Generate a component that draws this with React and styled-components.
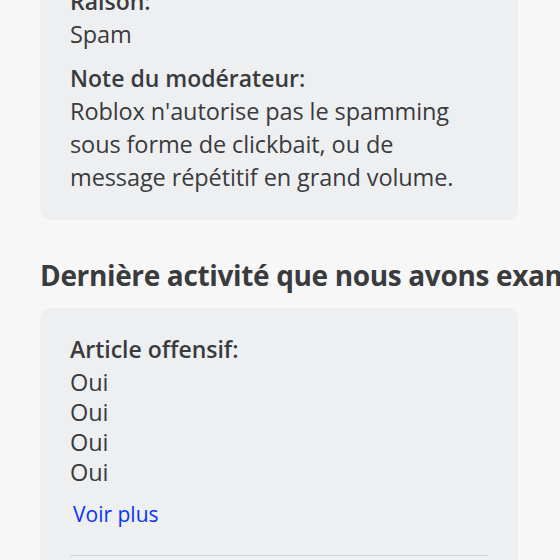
import React from 'react';
import styled, { createGlobalStyle } from 'styled-components';

const GlobalStyle = createGlobalStyle`
  html, body {
    margin: 0;
    padding: 0;
    background: #f7f7f8;
    overflow: hidden;
  }
  body {
    font-family: "Open Sans", "Liberation Sans", sans-serif;
    color: #393b3d;
  }
`;

const Page = styled.div`
  width: 560px;
  height: 560px;
  overflow: hidden;
  padding-left: 40px;
  box-sizing: border-box;
`;

const Scroll = styled.div`
  margin-top: -40px;
`;

const Card = styled.div`
  width: 478px;
  box-sizing: border-box;
  background: #eeeff1;
  border-radius: 10px;
  padding: 26px 30px 26px;
`;

const Field = styled.div`
  & + & {
    margin-top: 12px;
  }
`;

const Label = styled.div`
  font-size: 23px;
  font-weight: 600;
  line-height: 30px;
  margin-bottom: 3px;
`;

const Value = styled.div`
  font-size: 23.5px;
  font-weight: 400;
  letter-spacing: -0.1px;
  line-height: ${p => (p.$dense ? '30px' : '33px')};
  margin-top: ${p => (p.$dense ? '0' : '-1px')};
`;

const Heading = styled.h2`
  margin: 36px 0 14px;
  font-size: 28px;
  font-weight: 700;
  letter-spacing: -0.35px;
  line-height: 38px;
  white-space: nowrap;
  color: #393b3d;
`;

const MoreLink = styled.a`
  display: block;
  margin-top: 13px;
  padding-left: 3px;
  font-size: 21px;
  line-height: 28px;
  color: #0b35f5;
  text-decoration: none;
  cursor: pointer;
`;

const Divider = styled.hr`
  border: none;
  border-top: 1px solid #d4d6d9;
  margin: 27px 0 0;
`;

const offensive = ['Oui', 'Oui', 'Oui', 'Oui'];

export default function App() {
  return (
    <>
      <GlobalStyle />
      <Page>
        <Scroll>
          <Card>
            <Field>
              <Label>Raison:</Label>
              <Value>Spam</Value>
            </Field>
            <Field>
              <Label>Note du modérateur:</Label>
              <Value>
                Roblox n'autorise pas le spamming sous forme de clickbait, ou de message répétitif en grand volume.
              </Value>
            </Field>
          </Card>
          <Heading>Dernière activité que nous avons examinée</Heading>
          <Card>
            <Label>Article offensif:</Label>
            {offensive.map((v, i) => (
              <Value key={i} $dense>{v}</Value>
            ))}
            <MoreLink>Voir plus</MoreLink>
            <Divider />
          </Card>
        </Scroll>
      </Page>
    </>
  );
}
